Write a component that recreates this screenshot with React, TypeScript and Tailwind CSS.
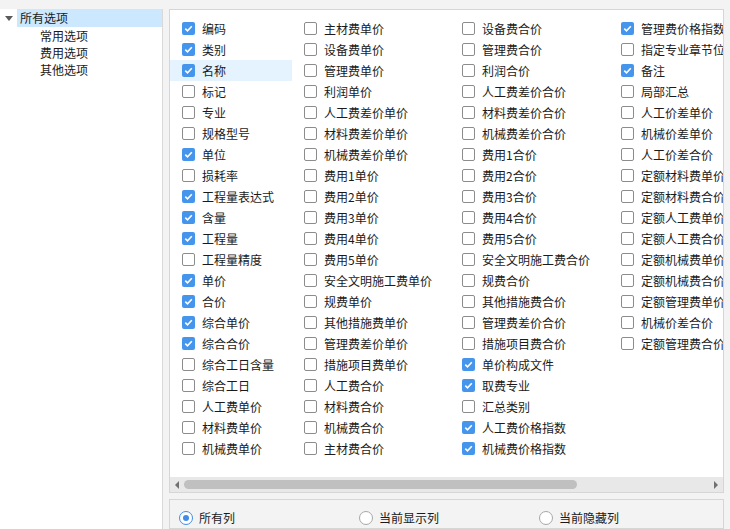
import React from 'react';

type Item = { label: string; checked?: boolean; active?: boolean };

const col1: Item[] = [
  { label: '编码', checked: true },
  { label: '类别', checked: true },
  { label: '名称', checked: true, active: true },
  { label: '标记' },
  { label: '专业' },
  { label: '规格型号' },
  { label: '单位', checked: true },
  { label: '损耗率' },
  { label: '工程量表达式', checked: true },
  { label: '含量', checked: true },
  { label: '工程量', checked: true },
  { label: '工程量精度' },
  { label: '单价', checked: true },
  { label: '合价', checked: true },
  { label: '综合单价', checked: true },
  { label: '综合合价', checked: true },
  { label: '综合工日含量' },
  { label: '综合工日' },
  { label: '人工费单价' },
  { label: '材料费单价' },
  { label: '机械费单价' },
];

const col2: Item[] = [
  '主材费单价', '设备费单价', '管理费单价', '利润单价', '人工费差价单价', '材料费差价单价',
  '机械费差价单价', '费用1单价', '费用2单价', '费用3单价', '费用4单价', '费用5单价',
  '安全文明施工费单价', '规费单价', '其他措施费单价', '管理费差价单价', '措施项目费单价',
  '人工费合价', '材料费合价', '机械费合价', '主材费合价',
].map((label) => ({ label }));

const col3: Item[] = [
  { label: '设备费合价' },
  { label: '管理费合价' },
  { label: '利润合价' },
  { label: '人工费差价合价' },
  { label: '材料费差价合价' },
  { label: '机械费差价合价' },
  { label: '费用1合价' },
  { label: '费用2合价' },
  { label: '费用3合价' },
  { label: '费用4合价' },
  { label: '费用5合价' },
  { label: '安全文明施工费合价' },
  { label: '规费合价' },
  { label: '其他措施费合价' },
  { label: '管理费差价合价' },
  { label: '措施项目费合价' },
  { label: '单价构成文件', checked: true },
  { label: '取费专业', checked: true },
  { label: '汇总类别' },
  { label: '人工费价格指数', checked: true },
  { label: '机械费价格指数', checked: true },
];

const col4: Item[] = [
  { label: '管理费价格指数', checked: true },
  { label: '指定专业章节位置' },
  { label: '备注', checked: true },
  { label: '局部汇总' },
  { label: '人工价差单价' },
  { label: '机械价差单价' },
  { label: '人工价差合价' },
  { label: '定额材料费单价' },
  { label: '定额材料费合价' },
  { label: '定额人工费单价' },
  { label: '定额人工费合价' },
  { label: '定额机械费单价' },
  { label: '定额机械费合价' },
  { label: '定额管理费单价' },
  { label: '机械价差合价' },
  { label: '定额管理费合价' },
];

function CheckBox({ checked }: { checked?: boolean }) {
  if (checked) {
    return (
      <span className="flex h-[13px] w-[13px] shrink-0 items-center justify-center rounded-[2px] bg-[#4595ec]">
        <svg width="9" height="9" viewBox="0 0 9 9">
          <polyline points="1.3,4.6 3.5,6.8 7.8,2.2" fill="none" stroke="white" strokeWidth="1.6" />
        </svg>
      </span>
    );
  }
  return <span className="h-[13px] w-[13px] shrink-0 rounded-[2px] border border-[#8c8c8c] bg-white" />;
}

function Column({ items, width }: { items: Item[]; width: string }) {
  return (
    <div className={`flex shrink-0 flex-col ${width}`}>
      {items.map((it) => (
        <div
          key={it.label}
          className={`flex h-[21px] items-center gap-[7px] pl-[12px] whitespace-nowrap ${it.active ? 'bg-[#e5f3ff]' : ''}`}
        >
          <CheckBox checked={it.checked} />
          <span>{it.label}</span>
        </div>
      ))}
    </div>
  );
}

function Radio({ label, selected }: { label: string; selected?: boolean }) {
  return (
    <div className="flex w-[180px] items-center gap-[6px]">
      {selected ? (
        <span className="flex h-[14px] w-[14px] items-center justify-center rounded-full border border-[#3f8de6] bg-white">
          <span className="h-[6px] w-[6px] rounded-full bg-[#3f8de6]" />
        </span>
      ) : (
        <span className="h-[14px] w-[14px] rounded-full border border-[#a8a8a8] bg-white" />
      )}
      <span>{label}</span>
    </div>
  );
}

export default function App() {
  return (
    <div className="flex h-[529px] w-[730px] overflow-hidden bg-[#f3f3f3] text-[12px] text-[#1a1a1a] [font-family:'Noto_Sans_CJK_SC','Noto_Sans',sans-serif]">
      {/* tree */}
      <div className="mt-[9px] w-[163px] shrink-0 border-r border-[#d9d9d9] bg-white">
        <div className="flex h-[18px] items-center">
          <span className="flex w-[17px] justify-center">
            <svg width="8" height="5" viewBox="0 0 8 5">
              <polygon points="0,0 8,0 4,5" fill="#5a5a5a" />
            </svg>
          </span>
          <span className="flex h-full flex-1 items-center bg-[#cce8ff] pl-[3px]">所有选项</span>
        </div>
        {['常用选项', '费用选项', '其他选项'].map((t) => (
          <div key={t} className="flex h-[17px] items-center pl-[40px]">
            {t}
          </div>
        ))}
      </div>

      {/* right side */}
      <div className="ml-[6px] mt-[9px] flex w-[555px] shrink-0 flex-col">
        <div className="flex h-[484px] flex-col border border-[#d6d6d6] bg-white">
          <div className="flex flex-1 overflow-hidden pt-[8px]">
            <Column items={col1} width="w-[122px]" />
            <Column items={col2} width="w-[158px]" />
            <Column items={col3} width="w-[159px]" />
            <Column items={col4} width="w-[140px]" />
          </div>
          <div className="flex h-[15px] items-center bg-[#e8e8e8]">
            <span className="flex w-[14px] justify-center">
              <svg width="4" height="8" viewBox="0 0 4 8">
                <polygon points="4,0 4,8 0,4" fill="#707070" />
              </svg>
            </span>
            <span className="h-[9px] w-[393px] rounded-full bg-[#c0c0c0]" />
            <span className="flex-1" />
            <span className="flex w-[14px] justify-center">
              <svg width="4" height="8" viewBox="0 0 4 8">
                <polygon points="0,0 0,8 4,4" fill="#707070" />
              </svg>
            </span>
          </div>
        </div>
        <div className="mt-[6px] flex-1 border border-[#d6d6d6] bg-[#f3f3f3] pl-[9px] pt-[9px]">
          <div className="flex h-[18px] items-center">
            <Radio label="所有列" selected />
            <Radio label="当前显示列" />
            <Radio label="当前隐藏列" />
          </div>
        </div>
      </div>
    </div>
  );
}
